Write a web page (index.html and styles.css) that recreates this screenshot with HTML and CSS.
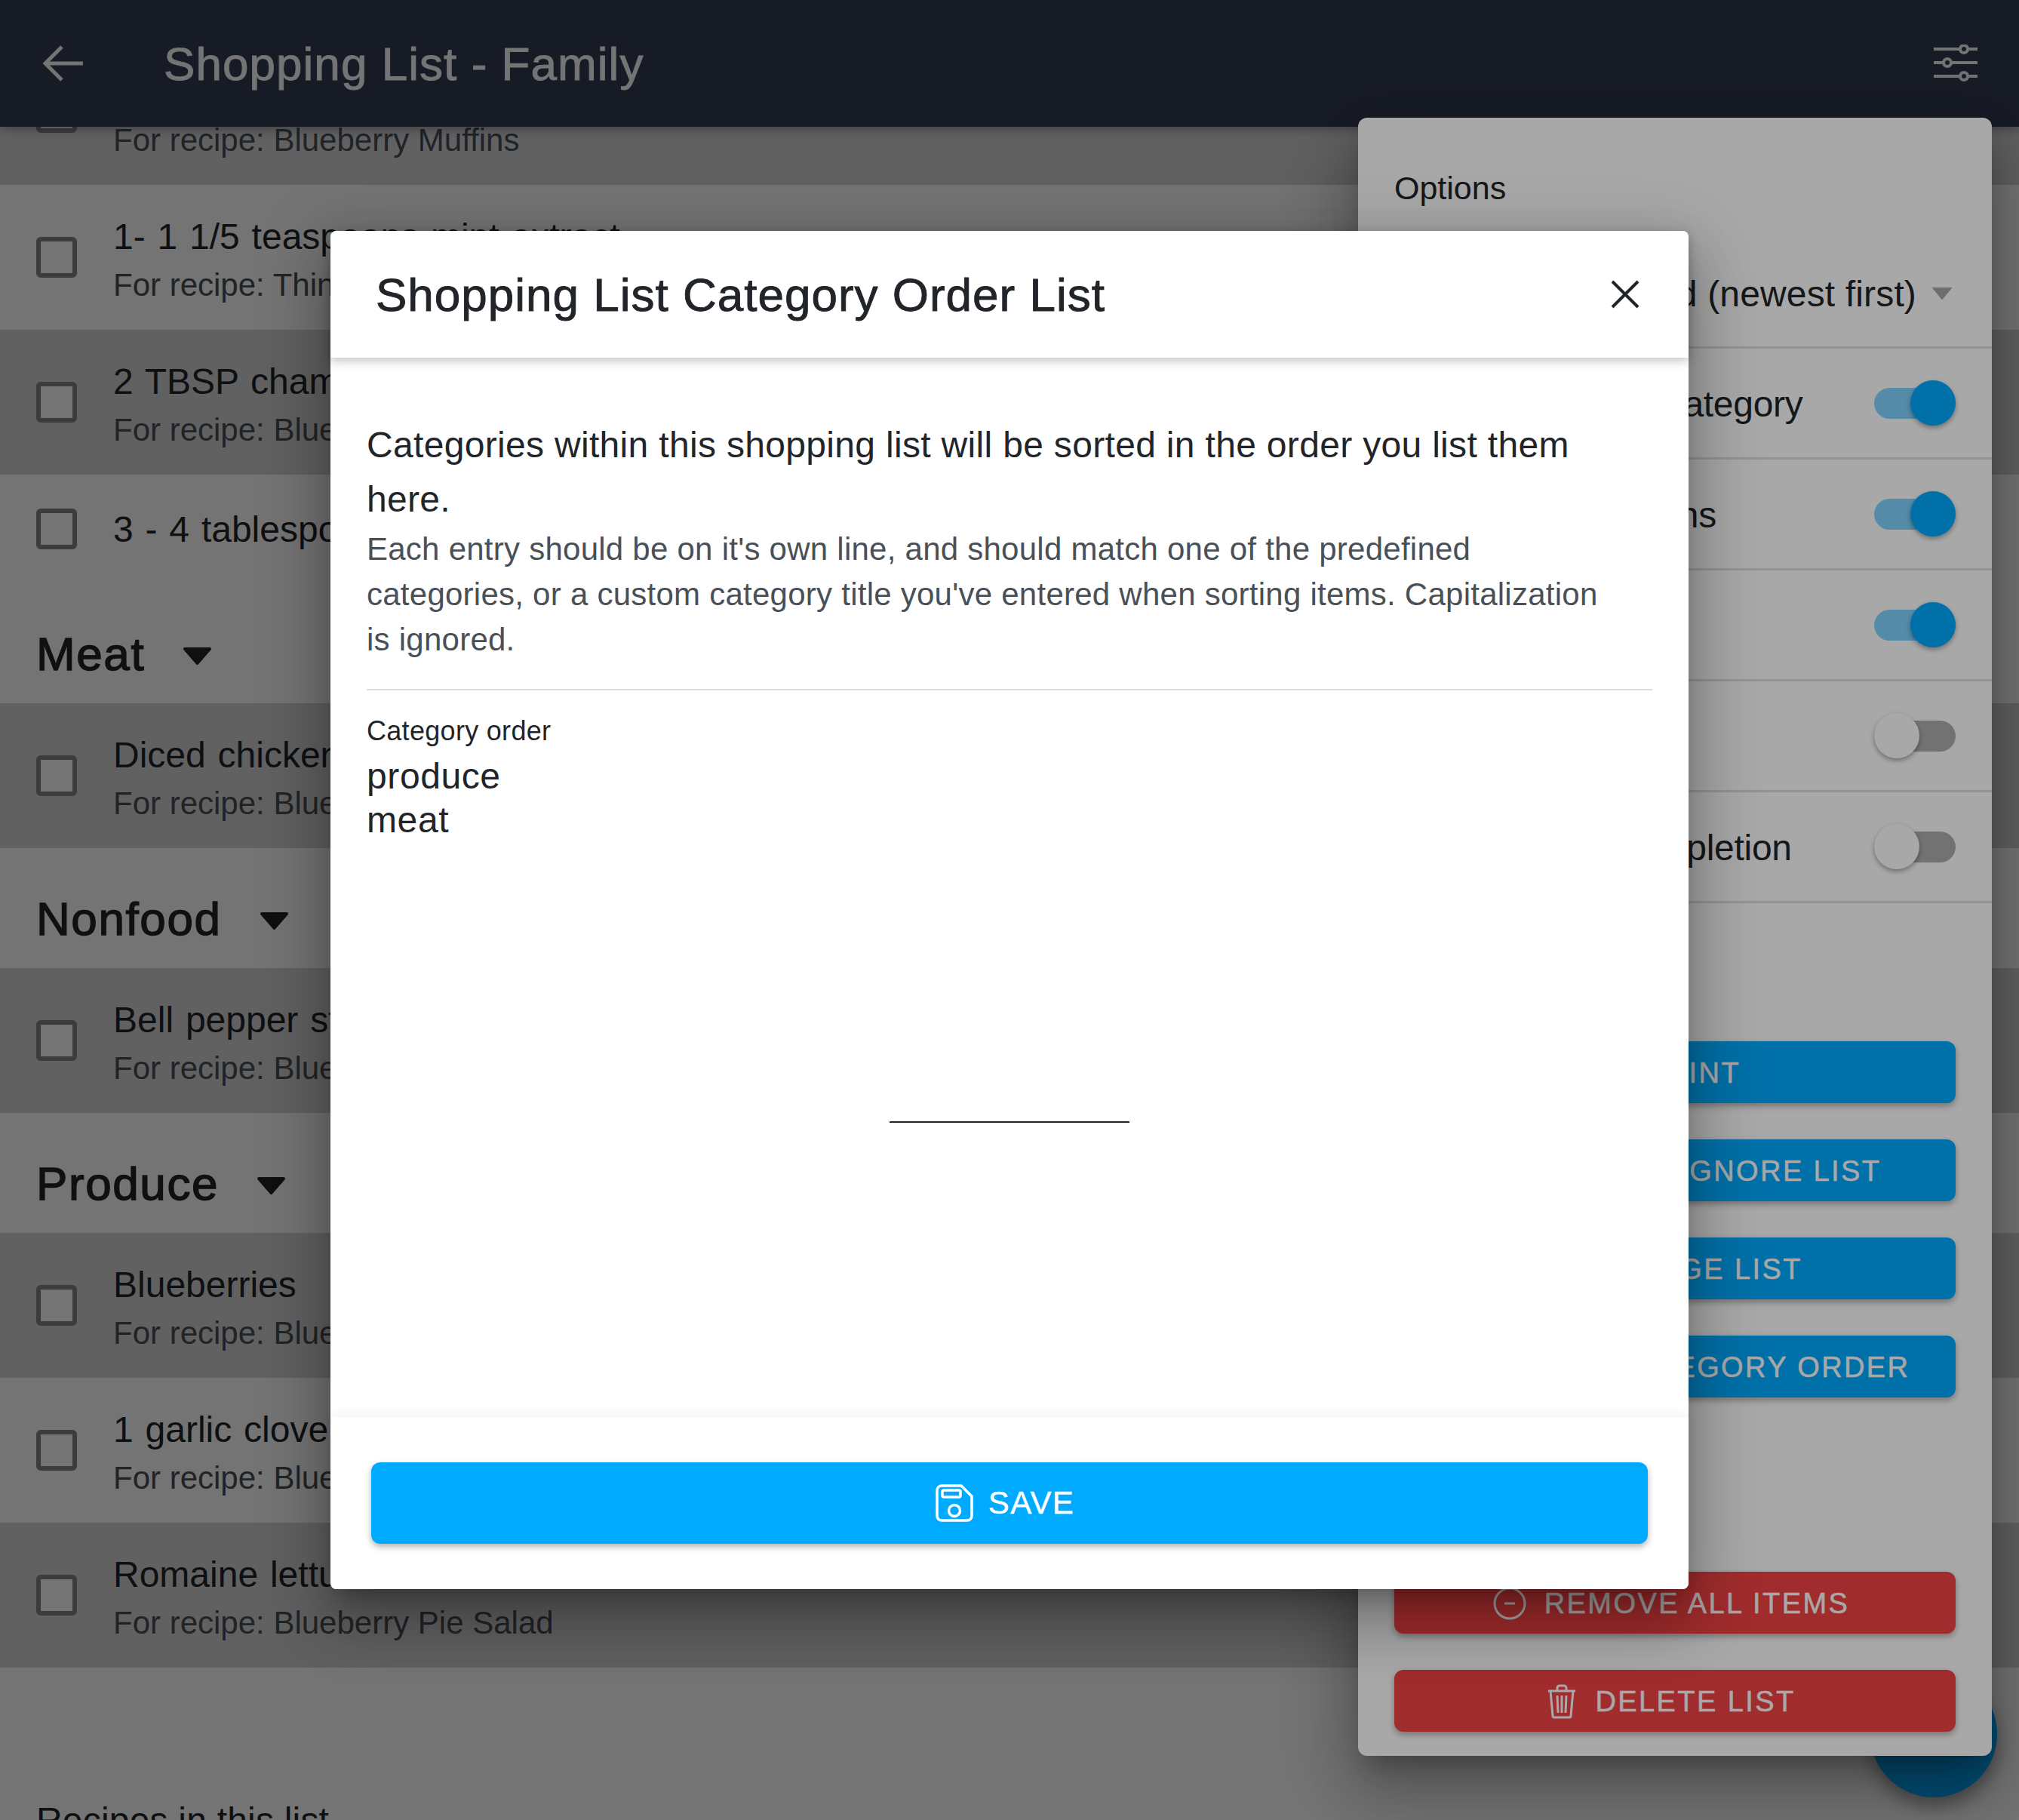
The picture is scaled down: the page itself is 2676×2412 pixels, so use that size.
FILE: index.html
```html
<!DOCTYPE html>
<html lang="en">
<head>
<meta charset="utf-8">
<title>Shopping List - Family</title>
<link rel="stylesheet" href="styles.css">
</head>
<body>
<div class="app">
  <header class="topbar">
    <svg class="back-icon" viewBox="0 0 56 48"><path d="M54 24H4M26 2 4 24l22 22"/></svg>
    <h1 class="topbar-title">Shopping List - Family</h1>
    <svg class="sliders-icon" viewBox="0 0 58 50"><path d="M0 6h34M46 6h12M0 24h12M24 24h34M0 42h34M46 42h12"/><circle cx="40" cy="6" r="5"/><circle cx="18" cy="24" r="5"/><circle cx="40" cy="42" r="5"/></svg>
  </header>

  <main class="list">
    <div class="row row-dark"><span class="check"></span><div class="row-text"><div class="item">1 cup blueberries</div><div class="recipe">For recipe: Blueberry Muffins</div></div></div>
    <div class="row"><span class="check"></span><div class="row-text"><div class="item">1- 1 1/5 teaspoons mint extract</div><div class="recipe">For recipe: Thin Mint Cookies</div></div></div>
    <div class="row row-dark"><span class="check"></span><div class="row-text"><div class="item">2 TBSP chambord</div><div class="recipe">For recipe: Blueberry Muffins</div></div></div>
    <div class="row row-single"><span class="check"></span><div class="row-text"><div class="item">3 - 4 tablespoons sugar</div></div></div>

    <h2 class="cat">Meat <svg class="cat-caret" viewBox="0 0 39 25"><path d="M3 3h33L19.5 22z"/></svg></h2>
    <div class="row row-dark"><span class="check"></span><div class="row-text"><div class="item">Diced chicken</div><div class="recipe">For recipe: Blueberry Pie Salad</div></div></div>

    <h2 class="cat">Nonfood <svg class="cat-caret" viewBox="0 0 39 25"><path d="M3 3h33L19.5 22z"/></svg></h2>
    <div class="row row-dark"><span class="check"></span><div class="row-text"><div class="item">Bell pepper strips</div><div class="recipe">For recipe: Blueberry Pie Salad</div></div></div>

    <h2 class="cat">Produce <svg class="cat-caret" viewBox="0 0 39 25"><path d="M3 3h33L19.5 22z"/></svg></h2>
    <div class="row row-dark"><span class="check"></span><div class="row-text"><div class="item">Blueberries</div><div class="recipe">For recipe: Blueberry Pie Salad</div></div></div>
    <div class="row"><span class="check"></span><div class="row-text"><div class="item">1 garlic clove</div><div class="recipe">For recipe: Blueberry Pie Salad</div></div></div>
    <div class="row row-dark"><span class="check"></span><div class="row-text"><div class="item">Romaine lettuce</div><div class="recipe">For recipe: Blueberry Pie Salad</div></div></div>

    <h3 class="recipes-title">Recipes in this list</h3>
  </main>

  <div class="fab"></div>
  <div class="scrim"></div>

  <aside class="panel">
    <div class="panel-title">Options</div>
    <div class="opt"><span>Sort</span><span class="select">Date added (newest first)<i class="select-caret"></i></span></div>
    <div class="opt"><span>Sort list items by category</span><span class="toggle on"></span></div>
    <div class="opt"><span>Show produce icons</span><span class="toggle on"></span></div>
    <div class="opt"><span>Show notes</span><span class="toggle on"></span></div>
    <div class="opt"><span>Show prices</span><span class="toggle"></span></div>
    <div class="opt"><span>Move item on completion</span><span class="toggle"></span></div>
    <div class="actions">
      <button class="btn btn-blue"><svg class="btn-icon btn-icon-small" viewBox="0 0 44 44"><circle cx="22" cy="22" r="20"/></svg>PRINT</button>
      <button class="btn btn-blue"><svg class="btn-icon" viewBox="0 0 44 44"><circle cx="22" cy="22" r="20"/></svg>EDIT ITEM IGNORE LIST</button>
      <button class="btn btn-blue"><svg class="btn-icon" viewBox="0 0 44 44"><circle cx="22" cy="22" r="20"/></svg>CHANGE LIST</button>
      <button class="btn btn-blue"><svg class="btn-icon" viewBox="0 0 44 44"><circle cx="22" cy="22" r="20"/></svg>ADJUST CATEGORY ORDER</button>
    </div>
    <div class="actions actions-danger">
      <button class="btn btn-red"><svg class="btn-icon" viewBox="0 0 44 44"><circle cx="22" cy="22" r="20"/><path d="M15 22h14"/></svg>REMOVE ALL ITEMS</button>
      <button class="btn btn-red"><svg class="btn-icon btn-icon-trash" viewBox="0 0 40 46"><path d="M2 9h36M14 9V5a3 3 0 0 1 3-3h6a3 3 0 0 1 3 3v4M5 9l3 33a2 2 0 0 0 2 2h20a2 2 0 0 0 2-2l3-33M14 15l1 23M20 15v23M26 15l-1 23"/></svg>DELETE LIST</button>
    </div>
  </aside>

  <div class="overlay">
    <section class="modal">
      <header class="modal-head">
        <h2 class="modal-title">Shopping List Category Order List</h2>
        <svg class="close-icon" viewBox="0 0 38 38"><path d="M2 2l34 34M36 2 2 36"/></svg>
      </header>
      <div class="modal-body">
        <p class="lead">Categories within this shopping list will be sorted in the order you list them here.</p>
        <p class="help">Each entry should be on it's own line, and should match one of the predefined categories, or a custom category title you've entered when sorting items. Capitalization is ignored.</p>
        <hr class="divider">
        <div class="field-label">Category order</div>
        <div class="field-value">produce<br>meat</div>
        <div class="field-line"></div>
      </div>
      <footer class="modal-foot">
        <button class="save">
          <svg class="save-icon" viewBox="0 0 50 50"><path d="M8 2h26l14 14v26a6 6 0 0 1-6 6H8a6 6 0 0 1-6-6V8a6 6 0 0 1 6-6z"/><rect x="9" y="8" width="24" height="9" rx="2"/><circle cx="25" cy="35" r="7.5"/></svg>
          SAVE
        </button>
      </footer>
    </section>
  </div>
</div>
</body>
</html>
```
FILE: styles.css
```css
* { box-sizing: border-box; }
html, body { margin: 0; height: 100%; }
body { font-family: "Liberation Sans", Arial, sans-serif; color: #212529; background: #fff; overflow: hidden; }
h1, h2, h3, p { margin: 0; font-weight: 400; }

.app { position: relative; width: 100%; height: 2412px; overflow: hidden; }

/* top bar */
.topbar { position: relative; z-index: 2; height: 168px; background: #353e54; color: #fff; display: flex; align-items: center; padding: 0 55px 0 56px; box-shadow: 0 4px 12px rgba(0,0,0,.3); }
.back-icon { width: 56px; height: 48px; fill: none; stroke: currentColor; stroke-width: 5; flex: none; }
.topbar-title { font-size: 62px; letter-spacing: 1.05px; margin-left: 105px; flex: 1; -webkit-text-stroke: .9px currentColor; }
.sliders-icon { width: 58px; height: 50px; fill: none; stroke: currentColor; stroke-width: 4; flex: none; }

/* list */
.list { position: relative; margin-top: -115px; }
.row { height: 192px; display: flex; align-items: center; padding-left: 48px; background: #fff; }
.row-dark { background: #d6d6d8; }
.row-single { height: 144px; }
.check { width: 54px; height: 54px; flex: none; border: 6px solid #858588; border-radius: 6px; background: #fff; margin-right: 48px; }
.row-text { flex: 1; padding-top: 9px; }
.row-single .row-text { padding-top: 2px; }
.item { font-size: 48px; line-height: 64px; word-spacing: 2.5px; color: #212529; white-space: nowrap; }
.recipe { font-size: 42px; line-height: 64px; color: #495057; white-space: nowrap; }
.cat { height: 159px; display: flex; align-items: center; padding: 28px 0 0 48px; font-size: 62px; letter-spacing: 1.6px; color: #212529; -webkit-text-stroke: 1.4px currentColor; }
.cat-caret { width: 39px; height: 25px; margin-left: 50px; margin-top: 6px; fill: currentColor; stroke: currentColor; stroke-width: 4; stroke-linejoin: round; }
.recipes-title { font-size: 48px; line-height: 56px; letter-spacing: .2px; margin: 175px 0 0 48px; color: #212529; }

.fab { position: absolute; left: 2479px; top: 2214px; width: 168px; height: 168px; border-radius: 50%; background: #00aaff; box-shadow: 0 12px 24px rgba(0,0,0,.35); }
.scrim { position: absolute; z-index: 3; inset: 0; background: rgba(0,0,0,.31); }

/* options panel */
.panel { position: absolute; z-index: 4; top: 156px; right: 36px; width: 840px; height: 2171px; background: #fff; border-radius: 12px; box-shadow: 0 48px 76px 6px rgba(0,0,0,.18), 0 18px 92px 16px rgba(0,0,0,.16), 0 22px 30px -14px rgba(0,0,0,.25); }
.panel-title { height: 159px; padding: 62px 48px 0; font-size: 43px; line-height: 62px; }
.opt { height: 147px; display: flex; align-items: center; justify-content: space-between; padding: 0 48px; border-bottom: 3px solid #e0e0e0; font-size: 48px; }
.opt > span:first-child { padding-top: 3px; letter-spacing: -.3px; }
.select { display: flex; align-items: center; padding-top: 4px; letter-spacing: .15px; }
.select-caret { width: 28px; height: 17px; margin-left: 20px; margin-right: 4px; background: #a8a8a8; clip-path: polygon(0 0, 100% 0, 50% 100%); }
.toggle { position: relative; width: 108px; height: 41px; flex: none; border-radius: 21px; background: #aeaeae; }
.toggle::after { content: ""; position: absolute; top: -10px; left: 0; width: 60px; height: 60px; border-radius: 50%; background: #fff; box-shadow: 0 3px 6px rgba(0,0,0,.35); }
.toggle.on { background: #80d4ff; }
.toggle.on::after { left: 48px; background: #00aaff; }
.actions { display: flex; flex-direction: column; gap: 48px; margin: 183px 48px 0; }
.actions-danger { margin-top: 231px; }
.btn { height: 82px; border: 0; border-radius: 12px; padding: 2px 10px 0 0; display: flex; align-items: center; justify-content: center; gap: 24px; font-family: inherit; font-size: 38px; letter-spacing: 2.4px; color: #fff; -webkit-text-stroke: .5px currentColor; box-shadow: 0 4px 8px rgba(0,0,0,.3); }
.btn-blue { background: #00aaff; }
.btn-red { background: #f44345; }
.btn-icon { width: 44px; height: 44px; fill: none; stroke: currentColor; stroke-width: 3; flex: none; }
.btn-icon-small { width: 34px; height: 34px; }
.btn-icon-trash { width: 40px; height: 46px; }

/* modal */
.overlay { position: absolute; z-index: 5; inset: 0; background: rgba(0,0,0,.34); display: flex; align-items: center; justify-content: center; }
.modal { width: 1800px; height: 1800px; background: #fff; border-radius: 8px; display: flex; flex-direction: column; box-shadow: 0 48px 76px 6px rgba(0,0,0,.18), 0 18px 92px 16px rgba(0,0,0,.16), 0 22px 30px -14px rgba(0,0,0,.25); }
.modal-head { position: relative; z-index: 1; height: 168px; flex: none; display: flex; align-items: center; justify-content: space-between; padding: 0 65px 0 60px; background: #fff; border-radius: 8px 8px 0 0; box-shadow: 0 4px 14px rgba(0,0,0,.25); }
.modal-title { font-size: 62px; letter-spacing: 1px; color: #212529; -webkit-text-stroke: .9px currentColor; }
.close-icon { width: 38px; height: 38px; fill: none; stroke: #212529; stroke-width: 4; flex: none; }
.modal-body { flex: 1; padding: 80px 48px 0; }
.lead { font-size: 48px; line-height: 72px; letter-spacing: .32px; }
.help { font-size: 42px; line-height: 60px; letter-spacing: .25px; color: #495057; max-width: 1660px; }
.divider { margin: 35px 0 0; border: 0; height: 2px; background: #ddd; }
.field-label { margin-top: 29px; font-size: 36px; line-height: 50px; letter-spacing: .3px; }
.field-value { margin-top: 6px; font-size: 48px; line-height: 58px; letter-spacing: .6px; }
.field-line { width: 318px; height: 2px; margin: 370px auto 0; background: #212529; }
.modal-foot { position: relative; height: 228px; flex: none; padding: 60px 54px; background: #fff; border-radius: 0 0 8px 8px; box-shadow: 0 -4px 16px rgba(0,0,0,.05); }
.save { width: 100%; height: 108px; border: 0; border-radius: 12px; padding: 0 12px 0 0; background: #00aaff; color: #fff; display: flex; align-items: center; justify-content: center; gap: 20px; font-family: inherit; font-size: 42px; letter-spacing: 1.4px; -webkit-text-stroke: .4px currentColor; box-shadow: 0 4px 8px rgba(0,0,0,.3); }
.save-icon { width: 50px; height: 50px; fill: none; stroke: currentColor; stroke-width: 3.5; flex: none; }
```
